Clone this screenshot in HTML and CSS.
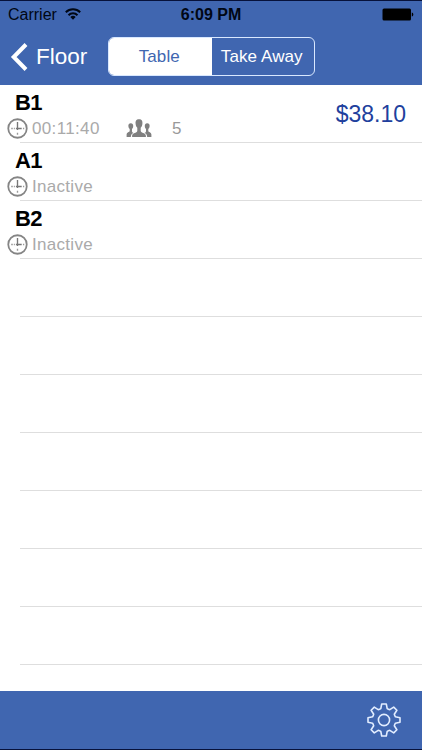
FILE: index.html
```html
<!DOCTYPE html>
<html lang="en">
<head>
<meta charset="utf-8">
<title>Tables</title>
<link rel="stylesheet" href="styles.css">
</head>
<body>
<svg class="defs" width="0" height="0" aria-hidden="true">
  <symbol id="clock" viewBox="0 0 20 20">
    <circle cx="10" cy="10" r="8.8" fill="none" stroke="#858585" stroke-width="1.7"/>
    <path d="M10 3.8V11.5M8.5 10H14" fill="none" stroke="#777" stroke-width="1.3"/>
    <path d="M10 14V16M4 10h1.5M6.5 10h1M15.2 10h1.2" fill="none" stroke="#999" stroke-width="1.3"/>
  </symbol>
</svg>
<div class="app">
  <header class="top">
    <div class="status">
      <div class="carrier"><span>Carrier</span>
        <svg class="wifi" viewBox="0 0 16 12" width="16" height="12"><g fill="none" stroke="#000714" stroke-width="2"><path d="M.8 4.2a10.2 10.2 0 0 1 14.4 0"/><path d="M3.5 7.2a6.3 6.3 0 0 1 9 0"/></g><path d="M8 11.8 5.3 9.1a3.8 3.8 0 0 1 5.4 0z" fill="#000714"/></svg>
      </div>
      <div class="time">6:09 PM</div>
      <svg class="battery" viewBox="0 0 32 13" width="32" height="13"><rect x=".5" y=".5" width="28.5" height="12" rx="1.5"/><path d="M29.8 4.5c2 .3 2 3.7 0 4z"/></svg>
    </div>
    <nav class="bar">
      <svg class="chevron" viewBox="0 0 18 28" width="18" height="28"><path d="M16 1.5 3.7 14 16 26.5" fill="none" stroke="#fff" stroke-width="4"/></svg>
      <span class="back">Floor</span>
      <div class="segments"><div class="segment selected">Table</div><div class="segment">Take Away</div></div>
    </nav>
  </header>
  <main class="list">
    <section class="row">
      <div class="info">
        <h2>B1</h2>
        <div class="meta"><svg class="clock"><use href="#clock"/></svg><span class="timer">00:11:40</span>
          <svg class="people" viewBox="0 0 26 19" width="26" height="19" fill="#808080"><path d="M4.8 4.2C2.8 4.2 2.2 5.5 2.4 7.3c.1 1.5.7 2.2 1.3 2.8v2C3.4 13.4.8 13.2.6 15.5V18h4.2c.1-2.4 1.1-3.3 2.8-4-.8-.5-1.4-.9-1.6-1.6v-2.3c.6-.6 1.1-1.3 1.2-2.8.1-1.8-.5-3.1-2.4-3.1zM21.2 4.2c2 0 2.6 1.3 2.4 3.1-.1 1.5-.7 2.2-1.3 2.8v2c.3 1.3 2.9 1.1 3.1 3.4V18h-4.2c-.1-2.4-1.1-3.3-2.8-4 .8-.5 1.4-.9 1.6-1.6v-2.3c-.6-.6-1.1-1.3-1.2-2.8-.1-1.8.5-3.1 2.4-3.1z"/><path d="M13 .3C10.1.3 9.3 2.4 9.6 4.8c.1 1.9.8 3.2 1.7 4v3.3c-.5 2.2-5 1.8-5.2 4.6V18h13.8v-1.3c-.2-2.8-4.7-2.4-5.2-4.6V8.8c.9-.8 1.6-2.1 1.7-4C16.7 2.4 15.9.3 13 .3z"/></svg>
          <span class="guests">5</span></div>
      </div>
      <div class="price">$38.10</div>
    </section>
    <section class="row"><div class="info"><h2>A1</h2><div class="meta"><svg class="clock"><use href="#clock"/></svg><span class="state">Inactive</span></div></div></section>
    <section class="row"><div class="info"><h2>B2</h2><div class="meta"><svg class="clock"><use href="#clock"/></svg><span class="state">Inactive</span></div></div></section>
    <div class="row"></div><div class="row"></div><div class="row"></div><div class="row"></div><div class="row"></div><div class="row"></div><div class="row"></div>
  </main>
  <footer class="bottom">
    <svg class="gear" viewBox="-17 -17 34 34" width="34" height="34" fill="none" stroke="#e2edff" stroke-width="1.6" stroke-linejoin="round"><path d="M-2.3-16H2.3L3.2-11.4Q4.4-10.6 5.8-10.3L9.7-12.9 12.9-9.7 10.3-5.8Q10.6-4.4 11.4-3.2L16-2.3V2.3L11.4 3.2Q10.6 4.4 10.3 5.8L12.9 9.7 9.7 12.9 5.8 10.3Q4.4 10.6 3.2 11.4L2.3 16H-2.3L-3.2 11.4Q-4.4 10.6-5.8 10.3L-9.7 12.9-12.9 9.7-10.3 5.8Q-10.6 4.4-11.4 3.2L-16 2.3V-2.3L-11.4-3.2Q-10.6-4.4-10.3-5.8L-12.9-9.7-9.7-12.9-5.8-10.3Q-4.4-10.6-3.2-11.4Z"/><circle r="5.6"/></svg>
  </footer>
</div>
</body>
</html>
```
FILE: styles.css
```css
* { box-sizing: border-box; }
body { margin: 0; font-family: "Liberation Sans", Arial, sans-serif; background: #fff; }
svg { display: block; flex: none; }
.defs { position: absolute; }
.app { height: 750px; display: flex; flex-direction: column; overflow: hidden; }
.top { height: 85px; flex: none; background: #4066b0; border-top: 1px solid #07123b; }
.status { height: 28px; display: grid; grid-template-columns: 1fr auto 1fr; align-items: center; padding: 0 8px; color: #000714; font-size: 16px; line-height: 28px; }
.carrier { display: flex; align-items: center; gap: 8px; }
.wifi { margin-top: -2px; }
.time { font-weight: bold; }
.battery { justify-self: end; margin-top: -1px; fill: #000; }
.bar { height: 55px; display: flex; align-items: center; padding-left: 10px; color: #fff; }
.back { width: 72px; margin-left: 8px; font-size: 22.5px; }
.segments { width: 207px; height: 39px; display: flex; border: 1.5px solid #d9e8ff; border-radius: 6px; overflow: hidden; font-size: 17px; line-height: 37px; text-align: center; }
.segment { flex: 1; white-space: nowrap; text-indent: -2px; letter-spacing: .1px; }
.selected { background: #fff; color: #4066b0; }
.list { flex: 1; min-height: 0; overflow: hidden; }
.row { height: 58px; display: flex; justify-content: space-between; background: linear-gradient(#dedede, #dedede) 20px 57px / 100% 1px no-repeat; padding-right: 16px; }
.info { padding-left: 7px; }
h2 { margin: 4px 0 0 8px; height: 28px; font-size: 22px; line-height: 28px; letter-spacing: -.6px; color: #000; }
.meta { height: 22px; display: flex; align-items: center; font-size: 17px; line-height: 22px; color: #aaa; }
.clock { width: 21px; height: 21px; margin-right: 4px; }
.timer { width: 94px; letter-spacing: .35px; padding-top: 1px; }
.state { letter-spacing: .3px; padding-top: 1px; }
.guests { margin-left: 20px; padding-top: 1px; color: #999; }
.price { font-size: 23px; line-height: 58px; color: #213f9d; }
.bottom { height: 59px; flex: none; display: flex; align-items: center; justify-content: flex-end; padding-right: 21px; background: #4066b0; border-bottom: 1px solid #07123b; }
```
